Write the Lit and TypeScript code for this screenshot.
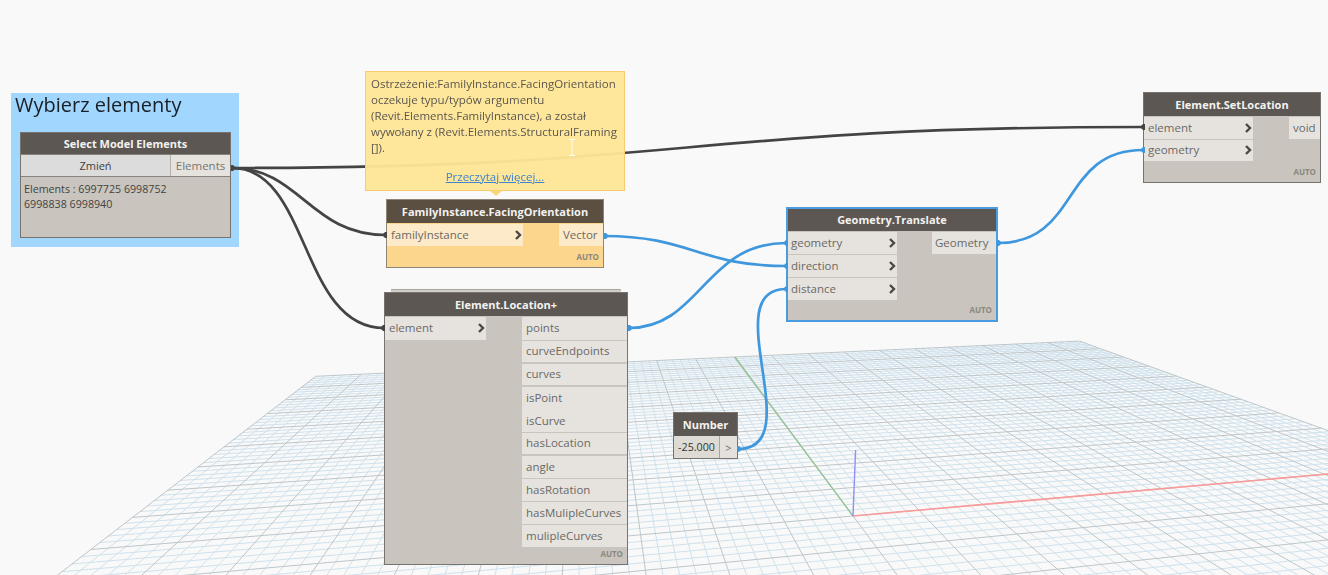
import { LitElement, html, css, svg } from "lit";
import { customElement } from "lit/decorators.js";

interface Port { t: string; h?: number; mt?: number }
interface NodeDef {
  title: string; x: number; y: number; w: number; h: number; theme?: string;
  inW: number; outW: number; ins: Port[]; outs: Port[]; stacked?: boolean;
}

const A = 0.174, B = 0.828;
const project = (u: number, v: number): [number, number] => {
  const w = 1 + u * A + v * B;
  return [(853 + u * A * 4709 + v * B * 590) / w, (516 + u * A * 174 + v * B * 165) / w];
};
const fmt = (p: [number, number]) => `${p[0].toFixed(1)} ${p[1].toFixed(1)}`;

function gridPath(major: boolean): string {
  let d = "";
  for (let i = -50; i <= 50; i++) {
    if ((i % 5 === 0) !== major) continue;
    const u = i / 50;
    const vEnd = (516 + u * A * 174 - 700 * (1 + u * A)) / (700 * B - 165 * B);
    d += `M${fmt(project(u, 1))}L${fmt(project(u, vEnd))}`;
    const v = i / 50;
    if (v < -0.415) continue;
    d += `M${fmt(project(-1, v))}L${fmt(project(1, v))}`;
  }
  return d;
}
const MINOR = gridPath(false);
const MAJOR = gridPath(true);

const NODES: NodeDef[] = [
  { title: "FamilyInstance.FacingOrientation", x: 386, y: 199, w: 218, h: 69, theme: "warn", inW: 136, outW: 44,
    ins: [{ t: "familyInstance", h: 22 }], outs: [{ t: "Vector", h: 22 }] },
  { title: "Element.Location+", x: 384, y: 292, w: 244, h: 273, stacked: true, inW: 101, outW: 105,
    ins: [{ t: "element", h: 23 }],
    outs: [
      { t: "points", h: 23 }, { t: "curveEndpoints", h: 21, mt: 1 }, { t: "curves", h: 21, mt: 2 },
      { t: "isPoint", h: 23, mt: 2 }, { t: "isCurve", h: 22 }, { t: "hasLocation", h: 21, mt: 1 },
      { t: "angle", h: 22, mt: 2 }, { t: "hasRotation", h: 22, mt: 1 },
      { t: "hasMulipleCurves", h: 22, mt: 1 }, { t: "mulipleCurves", h: 22, mt: 1 },
    ] },
  { title: "Geometry.Translate", x: 786, y: 207, w: 212, h: 115, theme: "sel", inW: 109, outW: 64,
    ins: [{ t: "geometry", h: 22 }, { t: "direction", h: 22, mt: 1 }, { t: "distance", h: 22, mt: 1 }],
    outs: [{ t: "Geometry", h: 22 }] },
  { title: "Element.SetLocation", x: 1143, y: 92, w: 178, h: 91, inW: 109, outW: 31,
    ins: [{ t: "element", h: 22 }, { t: "geometry", h: 21, mt: 1 }], outs: [{ t: "void", h: 22 }] },
];

const DARK_WIRES = [
  "M232 168C687 168 687 127 1143 127",
  "M232 168C300 168 310 235 386 235",
  "M232 168C310 168 300 328 384 328",
];
const BLUE_WIRES = [
  "M629 328C700 328 705 243 786 243",
  "M604 236C690 236 700 266 786 266",
  "M738 449C810 449 715 289 786 289",
  "M998 243C1080 243 1060 150 1143 150",
];

@customElement("app-root")
export class AppRoot extends LitElement {
  static styles = css`
    :host { display: block; width: 1328px; height: 575px; overflow: hidden; background: #f9f9f9;
      font-family: "Open Sans", "Noto Sans", sans-serif; }
    .canvas { position: relative; width: 1328px; height: 575px; overflow: hidden; filter: blur(0.35px); }
    .layer { position: absolute; left: 0; top: 0; }
    .minor { stroke: #cfe1ec; stroke-width: 1; fill: none; }
    .major { stroke: #bcc6ca; stroke-width: 1; fill: none; }
    .wire { fill: none; stroke-width: 2.7; stroke-linecap: round; }
    .dark { stroke: #444444; }
    .blue { stroke: #3f97dd; }
    .dot-dark { fill: #444444; }
    .dot-blue { fill: #3f97dd; }

    .group { position: absolute; left: 11px; top: 93px; width: 228px; height: 154px; background: #a1d6ff;
      padding: 0 4px; box-sizing: border-box; }
    .group-title { font-size: 20px; line-height: 24px; color: #1a1f26; }

    .node { position: absolute; display: flex; flex-direction: column; box-sizing: border-box;
      background: #c9c5be; border: 1px solid #77736e; color: #6a6966; font-size: 11.5px; }
    .node.warn { background: #fbd68c; border-color: #8f8574; }
    .node.warn .head { background: #5a4f40; }
    .node.warn .port { background: #fdeac8; }
    .node.sel { border: 2px solid #4a9ce0; }
    .node.sel .head { height: 22px; }
    .node.sel .port { padding-left: 3px; }
    .node.stacked::before { content: ""; position: absolute; left: 6px; right: 6px; top: -4px; height: 3px;
      background: #d2cfc9; border-top: 1px solid #a9a6a0; box-sizing: border-box; }
    .head { height: 23px; flex: none; box-sizing: border-box; padding-bottom: 1px; background: #5c5753; color: #f3f2f0;
      font-weight: 700; font-size: 11px; display: flex; align-items: center; justify-content: center; }
    .ports { flex: none; display: flex; justify-content: space-between; margin-top: 1px; }
    .col { display: flex; flex-direction: column; }
    .port { background: #e6e3de; display: flex; align-items: center; justify-content: space-between;
      padding: 0 4px 1px; box-sizing: border-box; line-height: 16px; white-space: nowrap; }
    .auto { position: absolute; right: 4px; bottom: 5px; font-size: 8px; font-weight: 700; line-height: 10px; color: #8b8781; }
    .chev { width: 7px; height: 10px; flex: none; margin-right: -3px; }
    .chev path { fill: none; stroke: #4c4844; stroke-width: 2.4; }

    .select { left: 20px; top: 132px; width: 211px; height: 106px; }
    .select-row { display: flex; height: 22px; flex: none; box-sizing: border-box; border-bottom: 1px solid #86827d; }
    .btn { flex: 1; background: #dcdcdc; color: #44413e; font-size: 11px; display: flex; align-items: center;
      justify-content: center; border-right: 1px solid #b5b2ad; }
    .sel-out { width: 59px; background: #e6e3de; color: #77756f; display: flex; align-items: center; justify-content: center; }
    .head.select-head { height: 22px; border-bottom: 1px solid #86827d; }
    .watch { padding: 5px 3px; font-size: 10.7px; line-height: 14.5px; color: #45423f; }

    .note { position: absolute; left: 365px; top: 71px; width: 260px; height: 120px; box-sizing: border-box;
      background: rgba(254, 229, 150, 0.955); border: 1px solid #f8cb6c; padding: 4px 5px;
      display: flex; flex-direction: column; color: #5b5650; font-size: 11.5px; line-height: 16px; }
    .note::after { content: ""; position: absolute; left: 124px; bottom: -6px; border-left: 6px solid transparent;
      border-right: 6px solid transparent; border-top: 5px solid #fbd67f; }
    .note p { margin: 0; white-space: pre-line; }
    .note a { margin-top: auto; margin-bottom: 1px; align-self: center; color: #3e84cf; text-decoration: underline; }
    .ibeam { position: absolute; left: 568px; top: 139px; width: 8px; height: 17px; }
    .ibeam path { stroke: #fffdf5; fill: none; stroke-width: 1; }

    .number { left: 673px; top: 412px; width: 65px; height: 47px; }
    .number-row { display: flex; flex: 1; background: #dedbd5; }
    .val { flex: 1; display: flex; align-items: center; justify-content: center; color: #333; font-size: 10.7px;
      border-right: 1px solid #a9a59f; }
    .go { width: 17px; display: flex; align-items: center; justify-content: center; color: #6d6a66; font-size: 11px;
      background: #e4e1dc; }
  `;

  private port(p: Port, input: boolean, w: number) {
    return html`<div class="port" style="width:${w}px;height:${p.h}px;margin-top:${p.mt ?? 0}px">
      <span>${p.t}</span>
      ${input ? html`<svg class="chev" viewBox="0 0 7 10"><path d="M1 1l4 4-4 4"></path></svg>` : ""}
    </div>`;
  }

  private node(n: NodeDef) {
    return html`<div class="node ${n.theme ?? ""} ${n.stacked ? "stacked" : ""}"
        style="left:${n.x}px;top:${n.y}px;width:${n.w}px;height:${n.h}px">
      <div class="head">${n.title}</div>
      <div class="ports">
        <div class="col">${n.ins.map((p) => this.port(p, true, n.inW))}</div>
        <div class="col">${n.outs.map((p) => this.port(p, false, n.outW))}</div>
      </div>
      <div class="auto">AUTO</div>
    </div>`;
  }

  render() {
    return html`<div class="canvas">
      <svg class="layer" width="1328" height="575" viewBox="0 0 1328 575">
        <path class="minor" d=${MINOR}></path>
        <path class="major" d=${MAJOR}></path>
        <path d="M853 516L1328 474" stroke="#fb9a9a" stroke-width="1.6" fill="none"></path>
        <path d="M853 516L735 357" stroke="#94c394" stroke-width="1.4" fill="none"></path>
        <path d="M853 516L855.6 450" stroke="#8f8ff6" stroke-width="1.4" fill="none"></path>
      </svg>

      <div class="group"><div class="group-title">Wybierz elementy</div></div>

      <svg class="layer" width="1328" height="575" viewBox="0 0 1328 575">
        ${DARK_WIRES.map((d) => svg`<path class="wire dark" d=${d}></path>`)}
        ${BLUE_WIRES.map((d) => svg`<path class="wire blue" d=${d}></path>`)}
      </svg>

      <div class="node select">
        <div class="head select-head">Select Model Elements</div>
        <div class="select-row"><div class="btn">Zmień</div><div class="sel-out">Elements</div></div>
        <div class="watch">Elements : 6997725 6998752<br />6998838 6998940</div>
      </div>

      ${NODES.map((n) => this.node(n))}

      <div class="node number">
        <div class="head">Number</div>
        <div class="number-row"><div class="val">-25.000</div><div class="go">&gt;</div></div>
      </div>

      <svg class="layer" width="1328" height="575" viewBox="0 0 1328 575">
        <path class="dot-dark" d="M231 165h2l2 2v2l-2 2h-2zM387 232h-2l-2 2v2l2 2h2zM385 325h-2l-2 2v2l2 2h2zM1145 124h-2l-2 2v2l2 2h2z"></path>
        <path class="dot-blue" d="M604 233h2l2 2v2l-2 2h-2zM628 325h2l2 2v2l-2 2h-2zM788 240h-2l-2 2v2l2 2h2zM788 263h-2l-2 2v2l2 2h2zM788 286h-2l-2 2v2l2 2h2zM997 240h2l2 2v2l-2 2h-2zM737 446h2l2 2v2l-2 2h-2zM1145 147h-2l-2 2v2l2 2h2z"></path>
      </svg>

      <div class="note">
        <p>Ostrzeżenie:FamilyInstance.FacingOrientation
        oczekuje typu/typów argumentu
        (Revit.Elements.FamilyInstance), a został
        wywołany z (Revit.Elements.StructuralFraming
        []).</p>
        <a>Przeczytaj więcej...</a>
      </div>
      <svg class="ibeam" viewBox="0 0 8 17"><path d="M1 .5h6M4 .5v16M1 16.5h6"></path></svg>
    </div>`;
  }
}
